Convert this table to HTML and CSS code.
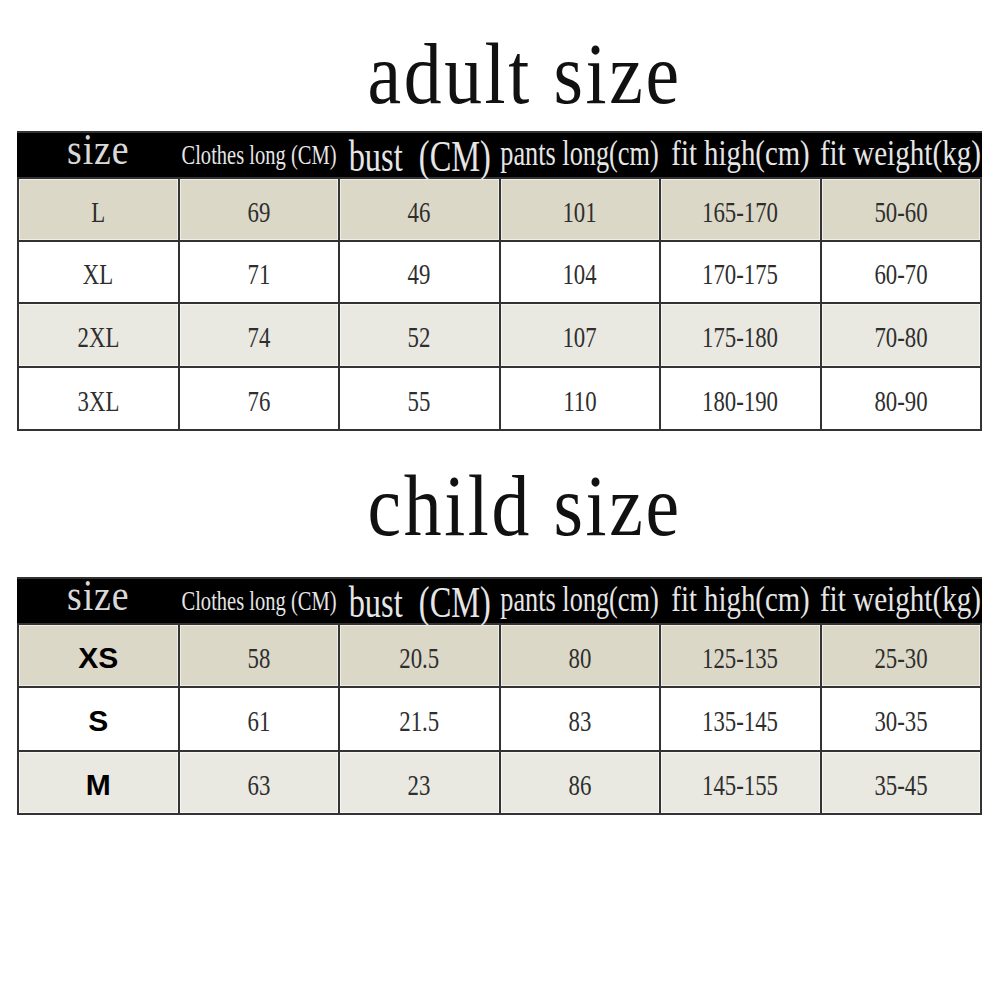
FILE: index.html
```html
<!DOCTYPE html>
<html lang="en">
<head>
<meta charset="utf-8">
<title>Size chart</title>
<link rel="stylesheet" href="styles.css">
</head>
<body>
<div class="sheet">
  <h1 class="title"><span>adult size</span></h1>
  <div class="table table-adult">
    <div class="row head">
      <div class="h"><span class="t-size">size</span></div>
      <div class="h"><span class="t-clothes">Clothes long (CM)</span></div>
      <div class="h"><span class="t-bust">bust&nbsp; (CM)</span></div>
      <div class="h"><span class="t-pants">pants long(cm)</span></div>
      <div class="h"><span class="t-high">fit high(cm)</span></div>
      <div class="h"><span class="t-weight">fit weight(kg)</span></div>
    </div>
    <div class="row tan">
      <div class="c"><span>L</span></div>
      <div class="c"><span>69</span></div>
      <div class="c"><span>46</span></div>
      <div class="c"><span>101</span></div>
      <div class="c"><span>165-170</span></div>
      <div class="c"><span>50-60</span></div>
    </div>
    <div class="row white">
      <div class="c"><span>XL</span></div>
      <div class="c"><span>71</span></div>
      <div class="c"><span>49</span></div>
      <div class="c"><span>104</span></div>
      <div class="c"><span>170-175</span></div>
      <div class="c"><span>60-70</span></div>
    </div>
    <div class="row pale">
      <div class="c"><span>2XL</span></div>
      <div class="c"><span>74</span></div>
      <div class="c"><span>52</span></div>
      <div class="c"><span>107</span></div>
      <div class="c"><span>175-180</span></div>
      <div class="c"><span>70-80</span></div>
    </div>
    <div class="row white">
      <div class="c"><span>3XL</span></div>
      <div class="c"><span>76</span></div>
      <div class="c"><span>55</span></div>
      <div class="c"><span>110</span></div>
      <div class="c"><span>180-190</span></div>
      <div class="c"><span>80-90</span></div>
    </div>
  </div>

  <h1 class="title title-child"><span>child size</span></h1>
  <div class="table table-child">
    <div class="row head">
      <div class="h"><span class="t-size">size</span></div>
      <div class="h"><span class="t-clothes">Clothes long (CM)</span></div>
      <div class="h"><span class="t-bust">bust&nbsp; (CM)</span></div>
      <div class="h"><span class="t-pants">pants long(cm)</span></div>
      <div class="h"><span class="t-high">fit high(cm)</span></div>
      <div class="h"><span class="t-weight">fit weight(kg)</span></div>
    </div>
    <div class="row tan">
      <div class="c"><b class="sz">XS</b></div>
      <div class="c"><span>58</span></div>
      <div class="c"><span>20.5</span></div>
      <div class="c"><span>80</span></div>
      <div class="c"><span>125-135</span></div>
      <div class="c"><span>25-30</span></div>
    </div>
    <div class="row white">
      <div class="c"><b class="sz">S</b></div>
      <div class="c"><span>61</span></div>
      <div class="c"><span>21.5</span></div>
      <div class="c"><span>83</span></div>
      <div class="c"><span>135-145</span></div>
      <div class="c"><span>30-35</span></div>
    </div>
    <div class="row pale">
      <div class="c"><b class="sz">M</b></div>
      <div class="c"><span>63</span></div>
      <div class="c"><span>23</span></div>
      <div class="c"><span>86</span></div>
      <div class="c"><span>145-155</span></div>
      <div class="c"><span>35-45</span></div>
    </div>
  </div>
</div>
</body>
</html>
```

FILE: styles.css
```css
html, body {
  margin: 0;
  padding: 0;
  background: #ffffff;
}

body {
  font-family: "Liberation Serif", "Times New Roman", serif;
  width: 1000px;
}

.sheet {
  padding: 31px 0 0 17px;
}

.title {
  margin: 0;
  width: 965px;
  height: 86px;
  box-sizing: border-box;
  padding-left: 50px;
  text-align: center;
  font-size: 86px;
  line-height: 86px;
  font-weight: normal;
  color: #111111;
}

.title span {
  display: inline-block;
  letter-spacing: 3px;
  transform: scaleX(0.88);
}

.title-child {
  margin-top: 32px;
}

.table {
  margin-top: 14px;
  width: 965px;
  box-sizing: border-box;
  display: grid;
  grid-template-columns: repeat(6, minmax(0, 1fr));
  gap: 2px;
  padding: 2px;
  background: #333333;
}

.table-adult {
  grid-template-rows: 44px 61px 60px 62px 61px;
}

.table-child {
  margin-top: 28px;
  grid-template-rows: 44px 61px 62px 61px;
}

.row {
  display: contents;
}

.h {
  min-width: 0;
  background: #000000;
  box-shadow: 2px 0 0 #000000, -2px 0 0 #000000;
  display: flex;
  justify-content: center;
  align-items: flex-start;
  white-space: nowrap;
  color: #e6e6e6;
}

.h span {
  display: inline-block;
  line-height: 1;
  position: relative;
}

.t-size {
  font-size: 44px;
  margin-top: -5px;
  letter-spacing: 1px;
  transform: scaleX(0.86);
  color: #d9d9d9;
}

.t-clothes {
  font-size: 27px;
  margin-top: 9px;
  transform: scaleX(0.76);
}

.t-bust {
  font-size: 45px;
  margin-top: 1px;
  transform: scaleX(0.72);
}

.t-pants {
  font-size: 36px;
  margin-top: 2px;
  transform: scaleX(0.73);
}

.t-high {
  font-size: 36px;
  margin-top: 2px;
  transform: scaleX(0.8);
}

.t-weight {
  font-size: 36px;
  margin-top: 2px;
  transform: scaleX(0.81);
}

.c {
  min-width: 0;
  box-sizing: border-box;
  padding-top: 4px;
  display: flex;
  justify-content: center;
  align-items: center;
  white-space: nowrap;
  color: #2e2e2e;
  box-shadow: inset 1px 1px 0 rgba(255, 255, 255, 0.55), inset -1px -1px 0 rgba(255, 255, 255, 0.55);
}

.c span {
  display: inline-block;
  font-size: 30px;
  line-height: 1;
  transform: scaleX(0.76);
}

.c .sz {
  font-family: "Liberation Sans", Arial, sans-serif;
  font-weight: bold;
  font-size: 30px;
  line-height: 1;
  color: #000000;
}

.tan .c {
  background: #dcd8c7;
}

.pale .c {
  background: #e9e8e1;
}

.white .c {
  background: #ffffff;
}
```
